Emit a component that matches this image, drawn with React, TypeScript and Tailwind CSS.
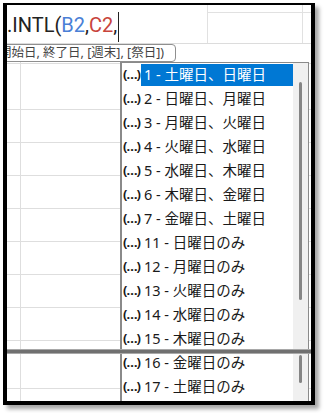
const items = [
  "1 - 土曜日、日曜日",
  "2 - 日曜日、月曜日",
  "3 - 月曜日、火曜日",
  "4 - 火曜日、水曜日",
  "5 - 水曜日、木曜日",
  "6 - 木曜日、金曜日",
  "7 - 金曜日、土曜日",
  "11 - 日曜日のみ",
  "12 - 月曜日のみ",
  "13 - 火曜日のみ",
  "14 - 水曜日のみ",
  "15 - 木曜日のみ",
  "16 - 金曜日のみ",
  "17 - 土曜日のみ",
];

// grid rows below the edit line, heights include the 1px bottom line
const rows = [
  "h-[20px]",
  "h-[46px]",
  "h-[33px]",
  "h-[33px]",
  "h-[33px]",
  "h-[33px]",
  "h-[33px]",
  "h-[33px]",
  "h-[33px]",
  "h-[48px]",
  "h-[40px]",
];

function Dropdown() {
  return (
    <div className="absolute left-[113px] top-[57px] flex h-[360px] w-[189px] border-t border-r border-l-2 border-[#8a8a8a] bg-white">
      <div className="flex w-[171px] flex-col">
        {items.map((item, i) => (
          <div key={item} className="flex h-[24px] shrink-0 items-center text-[#1a1a1a]">
            <span className="w-[19px] pl-[1px] text-[13px] font-bold tracking-[-1px]">(…)</span>
            <span
              className={`flex h-[22px] flex-1 items-center pl-[3px] text-[14.5px] ${
                i === 0 ? "bg-[#0078d4] text-white" : ""
              }`}
            >
              {item}
            </span>
          </div>
        ))}
      </div>
      <div className="flex w-[15px] flex-col items-center bg-[#f0f0f0]">
        <div className="mt-[19px] h-[218px] w-[3px] rounded-full bg-[#858585]" />
        <div className="mt-[55px] h-[28px] w-[3px] rounded-full bg-[#858585]" />
      </div>
    </div>
  );
}

export default function App() {
  return (
    <div className="h-[413px] w-[324px] bg-white pl-[3px] pt-[3px]">
      <div
        className="relative h-[402px] w-[312px] overflow-hidden border-t-2 border-r-4 border-b-4 border-l-4 border-black bg-white shadow-[4px_4px_4px_rgba(0,0,0,0.35)]"
        style={{fontFamily: '"Noto Sans", "Noto Sans CJK JP", sans-serif'}}
      >
        <div className="flex h-[39px] border-b border-[#dcdcdc]">
          <div className="flex w-[200px] items-start pt-[7px]">
            <span className="whitespace-nowrap font-[Roboto] text-[20px] leading-[26px] text-[#222]">
              .INTL(<span className="text-[#4a7fd6]">B2</span>,<span className="text-[#c8443c]">C2</span>,
            </span>
            <span className="ml-[1px] h-[30px] w-px bg-[#222]" />
          </div>
          <div className="w-[95px] border-l border-[#e1e1e1]">
            <div className="h-[8px] border-b border-[#e1e1e1]" />
          </div>
          <div className="flex-1 border-l border-[#e1e1e1]">
            <div className="h-[8px] border-b border-[#e1e1e1]" />
          </div>
        </div>

        {rows.map((h, i) => (
          <div key={i} className={`flex ${h} border-b border-[#dedede]`}>
            <div className="w-[14px] border-r border-[#dedede]" />
          </div>
        ))}

        <div className="absolute left-[-12px] top-[39px] flex h-[18px] w-[181px] items-center whitespace-nowrap rounded-[4px] border border-[#8f8f8f] bg-white pl-[3px] text-[12.5px] leading-[16px] text-[#444]">
          開始日, 終了日, [週末], [祭日])
        </div>

        <Dropdown />

        <div className="absolute left-0 right-0 top-[344px] h-[5px] border-y border-[#a8a8a8] bg-[#707070]" />
      </div>
    </div>
  );
}
